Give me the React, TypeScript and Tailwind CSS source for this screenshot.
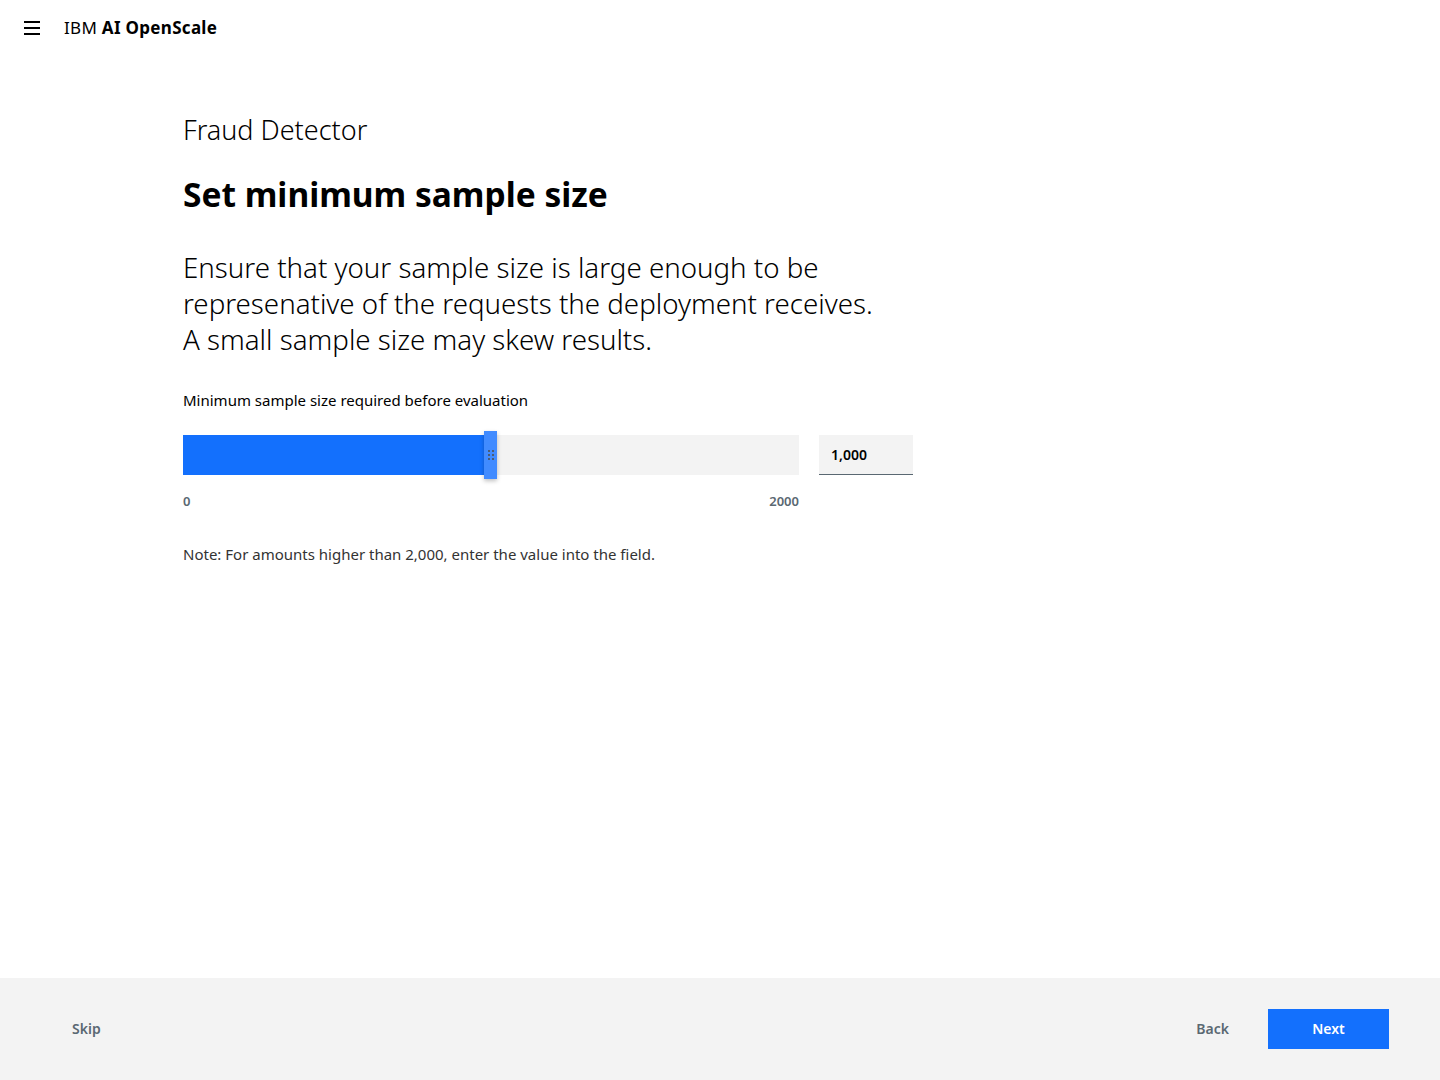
import React from "react";

const font = { fontFamily: '"Noto Sans", "Open Sans", sans-serif' };

function Menu() {
  return (
    <svg width="16" height="14" viewBox="0 0 16 14" aria-hidden>
      <rect x="0" y="0" width="16" height="2" fill="#000" />
      <rect x="0" y="6" width="16" height="2" fill="#000" />
      <rect x="0" y="12" width="16" height="2" fill="#000" />
    </svg>
  );
}

function Handle() {
  return (
    <div className="absolute top-[-4px] left-[301px] flex h-[48px] w-[13px] items-center justify-center bg-[#418bff] shadow-[0_2px_4px_rgba(0,0,0,0.25)]">
      <div className="grid grid-cols-2 gap-[2px]">
        {[0, 1, 2, 3, 4, 5].map((i) => (
          <span key={i} className="block h-[2px] w-[2px] bg-[#4b5c75]" />
        ))}
      </div>
    </div>
  );
}

export default function App() {
  return (
    <div className="flex min-h-[1080px] flex-col bg-white text-[#000]" style={font}>
      <header className="flex h-[55px] items-center">
        <div className="flex w-[64px] justify-center">
          <Menu />
        </div>
        <span className="text-[17px] leading-none tracking-[0.3px]">
          IBM <b className="font-bold">AI OpenScale</b>
        </span>
      </header>

      <main className="flex-1 pl-[183px] pt-[57px]">
        <h2 className="text-[27px] font-light leading-[36px]">Fraud Detector</h2>
        <h1 className="mt-[26px] text-[33.5px] font-bold leading-[40px]">Set minimum sample size</h1>
        <p className="mt-[35px] text-[27.7px] font-light leading-[36px]">
          Ensure that your sample size is large enough to be
          <br />
          represenative of the requests the deployment receives.
          <br />A small sample size may skew results.
        </p>

        <div className="mt-[33px] text-[15px] leading-[20px]">Minimum sample size required before evaluation</div>

        <div className="mt-[25px] flex items-start gap-[20px]">
          <div className="w-[616px]">
            <div className="relative h-[40px] bg-[#f3f3f3]">
              <div className="h-full w-[301px] bg-[#1370fd]" />
              <Handle />
            </div>
            <div className="mt-[18px] flex justify-between text-[13px] font-semibold leading-[16px] text-[#5a6872]">
              <span>0</span>
              <span>2000</span>
            </div>
          </div>
          <div className="flex h-[40px] w-[94px] items-center border-b border-[#5a6872] bg-[#f3f3f3] pl-[12px] text-[14px] font-semibold">
            1,000
          </div>
        </div>

        <div className="mt-[35px] text-[15px] leading-[20px] text-[#333]">
          Note: For amounts higher than 2,000, enter the value into the field.
        </div>
      </main>

      <footer className="flex h-[102px] items-center bg-[#f3f3f3] px-[51px] text-[14px] font-semibold leading-none text-[#5a6872]">
        <button className="px-[21px]">Skip</button>
        <div className="ml-auto flex items-center gap-[39px]">
          <button>Back</button>
          <button className="h-[40px] w-[121px] bg-[#1370fd] text-white">Next</button>
        </div>
      </footer>
    </div>
  );
}
